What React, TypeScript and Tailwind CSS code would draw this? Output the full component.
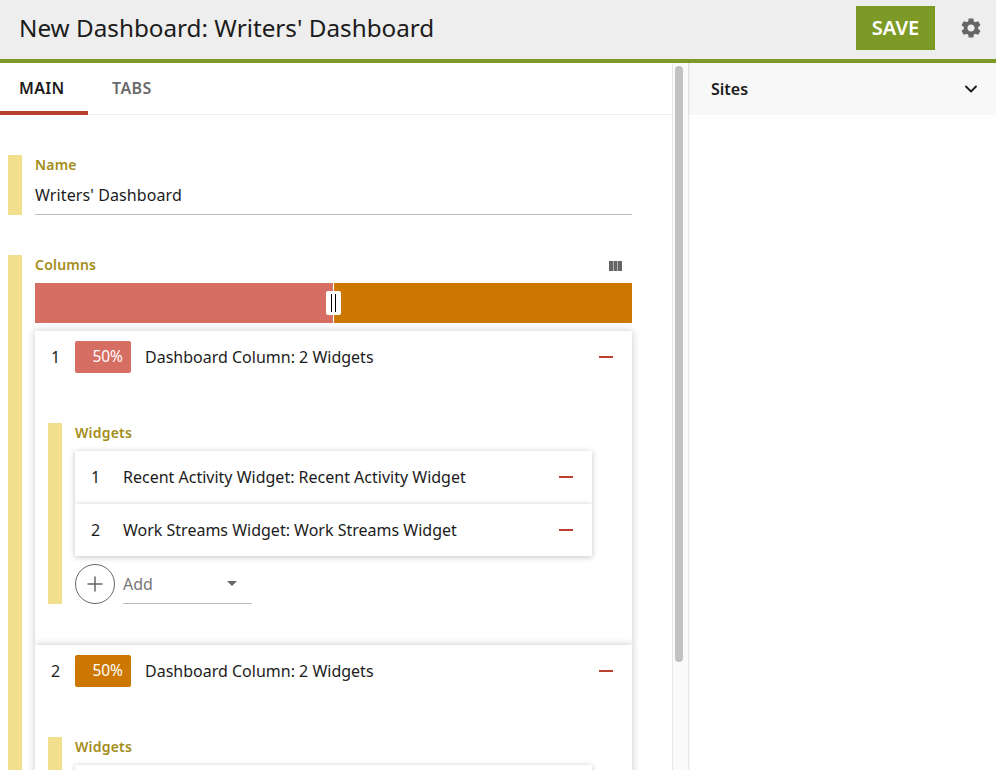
import React from "react";
import { ChevronDown, Plus } from "lucide-react";
import { MdSettings } from "react-icons/md";

const Minus: React.FC = () => <span className="block w-[14px] h-[2px] bg-[#b94030]" />;

const FieldLabel: React.FC<{ children: React.ReactNode }> = ({ children }) => (
  <div className="text-[14px] leading-[18px] font-semibold text-[#a38d1a] tracking-[0.2px]">{children}</div>
);

const WidgetRow: React.FC<{ index: number; title: string; spaced?: boolean }> = ({ index, title, spaced }) => (
  <div className={`flex items-center bg-white shadow-[0_1px_6px_rgba(0,0,0,0.24)] ${spaced ? "h-[53px] pb-px" : "h-[52px]"}`}>
    <span className="w-[48px] pl-4 text-[16px] text-[#1c1c1c]">{index}</span>
    <span className="flex-1 text-[16px] text-[#1c1c1c]">{title}</span>
    <span className="pr-[19px]">
      <Minus />
    </span>
  </div>
);

const ColumnCard: React.FC<{ index: number; pillClass: string; children?: React.ReactNode }> = ({
  index,
  pillClass,
  children,
}) => (
  <div className="bg-white shadow-[0_0_8px_rgba(0,0,0,0.22)]">
    <div className="flex items-center mt-[10px] h-[32px] pt-0">
      <span className="w-[40px] pl-4 text-[16px] text-[#1c1c1c]">{index}</span>
      <span className={`flex items-center justify-end w-[56px] h-[32px] pr-[8px] rounded-[2px] text-[15.5px] text-white ${pillClass}`}>
        50%
      </span>
      <span className="flex-1 pl-[14px] text-[16px] text-[#1c1c1c]">Dashboard Column: 2 Widgets</span>
      <span className="pr-[19px]">
        <Minus />
      </span>
    </div>
    {children}
  </div>
);

const App: React.FC = () => {
  return (
    <div className="h-[770px] w-[996px] overflow-hidden flex flex-col bg-white font-['Noto_Sans',sans-serif]">
      {/* Header */}
      <header className="h-[63px] shrink-0 flex items-center bg-[#eeeeee] border-b-4 border-[#7d9a26] pb-[3px] pl-[19px] pr-[13px]">
        <h1 className="flex-1 text-[24.25px] font-normal text-[#1c1c1c]">New Dashboard: Writers' Dashboard</h1>
        <button className="w-[79px] h-[44px] bg-[#7d9a26] text-white text-[20px] font-semibold">SAVE</button>
        <MdSettings className="ml-[24px] text-[#666666]" size={24} />
      </header>

      <div className="flex-1 flex min-h-0">
        {/* Main pane */}
        <main className="w-[673px] shrink-0 overflow-hidden border-r border-[#e6e6e6]">
          <div className="flex h-[52px] border-b border-[#eeeeee]">
            <div className="w-[88px] h-[52px] pt-[14px] pl-[19px] border-b-4 border-[#b94030] text-[16px] leading-[22px] font-semibold tracking-[0.3px] text-[#1c1c1c]">
              MAIN
            </div>
            <div className="pl-[24px] pt-[14px] text-[16px] leading-[22px] font-semibold tracking-[0.4px] text-[#6b6b6b]">TABS</div>
          </div>

          {/* Name */}
          <section className="flex mt-10 ml-2 w-[624px] h-[60px]">
            <div className="w-[14px] bg-[#f1df8e]" />
            <div className="flex-1 pl-[13px] pt-[1px]">
              <FieldLabel>Name</FieldLabel>
              <div className="mt-[4px] h-[37px] pt-[5px] text-[16px] leading-[24px] tracking-[0.1px] text-[#1c1c1c] border-b border-[#bdbdbd]">
                Writers' Dashboard
              </div>
            </div>
          </section>

          {/* Columns */}
          <section className="flex mt-10 ml-2 w-[624px]">
            <div className="w-[14px] shrink-0 bg-[#f1df8e]" />
            <div className="flex-1 pl-[13px]">
              <div className="flex items-start justify-between h-[28px] pt-[1px] pr-[10px]">
                <FieldLabel>Columns</FieldLabel>
                <svg className="mt-[5px]" width="13" height="10" viewBox="0 0 13 10" fill="#666666" aria-hidden="true">
                  <rect x="0" y="0" width="4" height="10" />
                  <rect x="4.5" y="0" width="4" height="10" />
                  <rect x="9" y="0" width="4" height="10" />
                </svg>
              </div>

              {/* Column split slider */}
              <div className="relative flex h-10">
                <div className="w-[299px] bg-[#d66e64] border-r border-white" />
                <div className="flex-1 bg-[#cc7700]" />
                <div className="absolute left-[291px] top-[8px] flex gap-[3px] justify-center items-center w-[15px] h-[24px] bg-white rounded-[2px]">
                  <span className="w-px h-[18px] bg-black" />
                  <span className="w-px h-[18px] bg-black" />
                </div>
              </div>

              <div className="mt-2 flex flex-col">
                <ColumnCard index={1} pillClass="bg-[#d66e64]">
                  <div className="flex mt-[50px] ml-[13px] pb-[41px]">
                    <div className="w-[14px] shrink-0 bg-[#f1df8e]" />
                    <div className="pl-[13px] w-[530px]">
                      <div className="h-[28px] pt-[1px]">
                        <FieldLabel>Widgets</FieldLabel>
                      </div>
                      <div className="flex flex-col">
                        <WidgetRow index={1} spaced title="Recent Activity Widget: Recent Activity Widget" />
                        <WidgetRow index={2} title="Work Streams Widget: Work Streams Widget" />
                      </div>
                      <div className="flex mt-2 h-10">
                        <button className="flex items-center justify-center w-10 h-10 rounded-full border border-[#666666] text-[#666666]">
                          <Plus size={24} strokeWidth={1.5} />
                        </button>
                        <div className="flex items-center justify-between ml-2 w-[129px] border-b border-[#bdbdbd] pr-[15px] text-[16px] text-[#777777]">
                          <span>Add</span>
                          <span className="w-0 h-0 border-x-[5px] border-x-transparent border-t-[5px] border-t-[#666666]" />
                        </div>
                      </div>
                    </div>
                  </div>
                </ColumnCard>

                <ColumnCard index={2} pillClass="bg-[#cc7700]">
                  <div className="flex mt-[50px] ml-[13px] h-[120px]">
                    <div className="w-[14px] shrink-0 bg-[#f1df8e]" />
                    <div className="pl-[13px] w-[530px]">
                      <div className="h-[28px] pt-[1px]">
                        <FieldLabel>Widgets</FieldLabel>
                      </div>
                      <div className="h-[60px] bg-white shadow-[0_1px_6px_rgba(0,0,0,0.24)]" />
                    </div>
                  </div>
                </ColumnCard>
              </div>
            </div>
          </section>
        </main>

        {/* Scrollbar */}
        <div className="w-[15px] shrink-0 bg-[#fafafa] pl-[2px] pt-[3px]">
          <div className="w-[8px] h-[596px] rounded-full bg-[#c1c1c1]" />
        </div>

        {/* Side pane */}
        <aside className="flex-1 shadow-[inset_2px_0_2px_-1px_rgba(0,0,0,0.12)]">
          <div className="flex items-center justify-between h-[52px] bg-[#f8f8f8] pl-[23px] pr-[15px] shadow-[inset_2px_0_2px_-1px_rgba(0,0,0,0.12)]">
            <span className="text-[16px] font-semibold text-[#1c1c1c]">Sites</span>
            <ChevronDown size={20} strokeWidth={2.2} className="text-[#1c1c1c]" />
          </div>
        </aside>
      </div>
    </div>
  );
};

export default App;
